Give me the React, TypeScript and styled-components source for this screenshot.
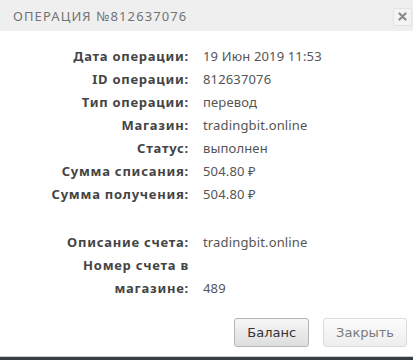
import styled, { createGlobalStyle } from "styled-components"

const Global = createGlobalStyle`
  html, body { margin: 0; padding: 0; background: #fff; }
  body { font-family: "Noto Sans", "DejaVu Sans", sans-serif; }
`

const Dialog = styled.div`
  width: 413px;
  height: 360px;
  display: flex;
  flex-direction: column;
  background: #fff;
  overflow: hidden;
`

const Header = styled.div`
  height: 31px;
  background: #efefef;
  display: flex;
  align-items: center;
  justify-content: space-between;
  padding: 0 1px 0 13px;
`

const Title = styled.div`
  font-size: 13px;
  letter-spacing: 1.1px;
  color: #737373;
  text-transform: uppercase;
`

const CloseBtn = styled.div`
  width: 17px;
  height: 16px;
  border: 1px solid #e2e2e2;
  border-radius: 2px;
  background: #f4f4f4;
  display: flex;
  align-items: center;
  justify-content: center;
  margin-top: 2px;
`

const Body = styled.div`
  flex: 1;
  padding: 14px 0 0 0;
  display: grid;
  grid-template-columns: 189px 1fr;
  column-gap: 14px;
  align-content: start;
`

const Label = styled.div`
  text-align: right;
  font-weight: 700;
  font-size: 13px;
  line-height: 23px;
  letter-spacing: 0.75px;
  color: #444;
  padding-left: 50px;
`

const Value = styled.div<{ $bottom?: boolean }>`
  font-size: 13px;
  line-height: 23px;
  letter-spacing: 0.15px;
  color: #555;
  align-self: ${p => (p.$bottom ? "end" : "start")};
`

const Spacer = styled.div`
  grid-column: 1 / span 2;
  height: 25px;
`

const Footer = styled.div`
  display: flex;
  justify-content: flex-end;
  gap: 14px;
  padding: 0 6px 9px 0;
`

const Button = styled.button<{ $muted?: boolean }>`
  height: 29px;
  padding: 0 12px;
  font-family: "DejaVu Sans", sans-serif;
  font-size: 13px;
  color: ${p => (p.$muted ? "#7a7a7a" : "#333")};
  border: 1px solid ${p => (p.$muted ? "#dcdcdc" : "#b5b5b5")};
  border-radius: 3px;
  background: ${p =>
    p.$muted
      ? "linear-gradient(#fbfbfb, #eeeeee)"
      : "linear-gradient(#f6f6f6, #dedede)"};
`

const BottomBar = styled.div`
  height: 3px;
  background: #363f44;
  border-top: 1px solid #c9cdd0;
`

const rows: [string, string][] = [
  ["Дата операции:", "19 Июн 2019 11:53"],
  ["ID операции:", "812637076"],
  ["Тип операции:", "перевод"],
  ["Магазин:", "tradingbit.online"],
  ["Статус:", "выполнен"],
  ["Сумма списания:", "504.80 ₽"],
  ["Сумма получения:", "504.80 ₽"],
]

export default function App() {
  return (
    <>
      <Global />
      <Dialog>
        <Header>
          <Title>Операция №812637076</Title>
          <CloseBtn>
            <svg width="9" height="9" viewBox="0 0 9 9">
              <path d="M1.5 1.5 L7.5 7.5 M7.5 1.5 L1.5 7.5" stroke="#8a8a8a" strokeWidth="2.2" strokeLinecap="round" />
            </svg>
          </CloseBtn>
        </Header>
        <Body>
          {rows.map(([l, v]) => (
            <>
              <Label key={l}>{l}</Label>
              <Value key={l + "v"}>{v}</Value>
            </>
          ))}
          <Spacer />
          <Label>Описание счета:</Label>
          <Value>tradingbit.online</Value>
          <Label>Номер счета в магазине:</Label>
          <Value $bottom>489</Value>
        </Body>
        <Footer>
          <Button>Баланс</Button>
          <Button $muted>Закрыть</Button>
        </Footer>
        <BottomBar />
      </Dialog>
    </>
  )
}
